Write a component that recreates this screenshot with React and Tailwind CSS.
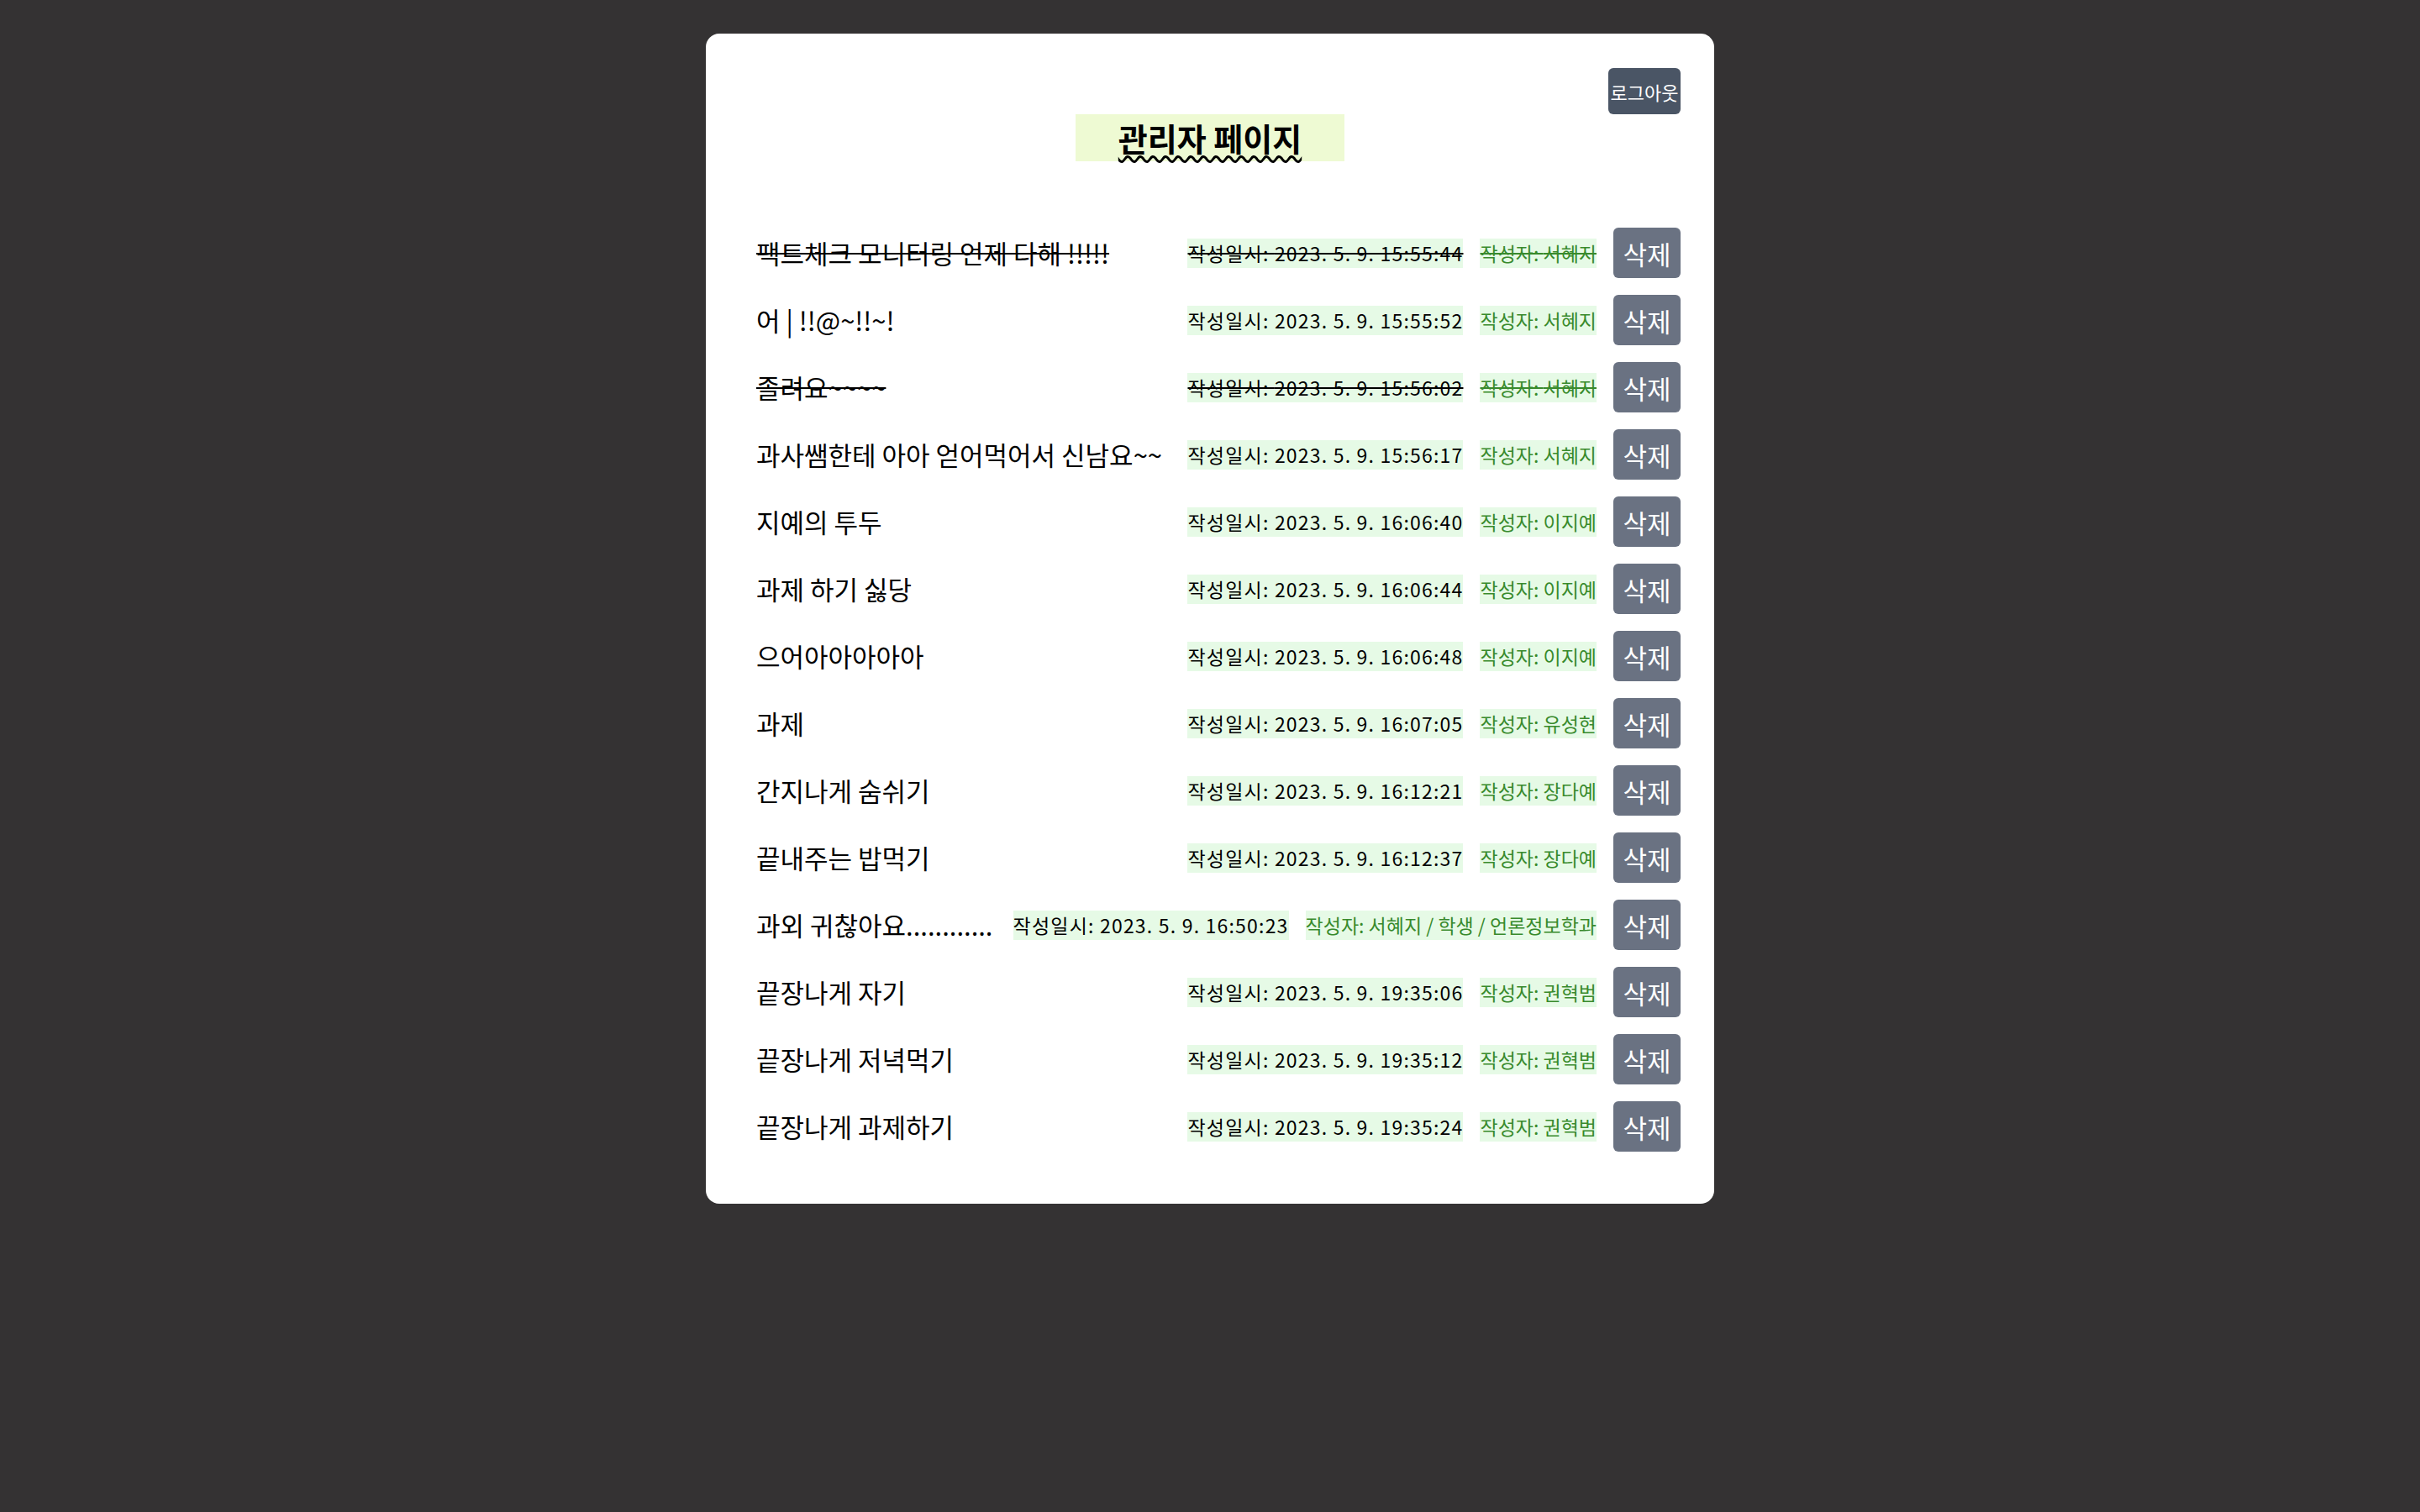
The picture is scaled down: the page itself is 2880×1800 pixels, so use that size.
import React, { useState } from "react";

const initialTodos = [
  { id: 1, text: "팩트체크 모니터링 언제 다해 !!!!!", date: "2023. 5. 9. 15:55:44", author: "서혜지", done: true },
  { id: 2, text: "어 | !!@~!!~!", date: "2023. 5. 9. 15:55:52", author: "서혜지", done: false },
  { id: 3, text: "졸려요~~~~", date: "2023. 5. 9. 15:56:02", author: "서혜지", done: true },
  { id: 4, text: "과사쌤한테 아아 얻어먹어서 신남요~~", date: "2023. 5. 9. 15:56:17", author: "서혜지", done: false },
  { id: 5, text: "지예의 투두", date: "2023. 5. 9. 16:06:40", author: "이지예", done: false },
  { id: 6, text: "과제 하기 싫당", date: "2023. 5. 9. 16:06:44", author: "이지예", done: false },
  { id: 7, text: "으어아아아아아", date: "2023. 5. 9. 16:06:48", author: "이지예", done: false },
  { id: 8, text: "과제", date: "2023. 5. 9. 16:07:05", author: "유성현", done: false },
  { id: 9, text: "간지나게 숨쉬기", date: "2023. 5. 9. 16:12:21", author: "장다예", done: false },
  { id: 10, text: "끝내주는 밥먹기", date: "2023. 5. 9. 16:12:37", author: "장다예", done: false },
  { id: 11, text: "과외 귀찮아요............", date: "2023. 5. 9. 16:50:23", author: "서혜지 / 학생 / 언론정보학과", done: false },
  { id: 12, text: "끝장나게 자기", date: "2023. 5. 9. 19:35:06", author: "권혁범", done: false },
  { id: 13, text: "끝장나게 저녁먹기", date: "2023. 5. 9. 19:35:12", author: "권혁범", done: false },
  { id: 14, text: "끝장나게 과제하기", date: "2023. 5. 9. 19:35:24", author: "권혁범", done: false },
];

const TodoItem = ({ todo, onDelete }) => {
  const strike = todo.done ? "line-through decoration-2" : "";

  return (
    <li className="flex h-[80px] items-center">
      <span className={`flex-1 text-[31px] leading-[42px] text-black whitespace-nowrap ${strike}`}>
        {todo.text}
      </span>
      <div className="flex items-center gap-5">
        <span className={`bg-[#e6fae6] text-[23px] tracking-[1.2px] leading-[35px] text-black whitespace-nowrap ${strike}`}>
          작성일시: {todo.date}
        </span>
        <span className={`bg-[#e6fae6] text-[23px] leading-[35px] text-[#388a2c] whitespace-nowrap ${strike}`}>
          작성자: {todo.author}
        </span>
        <button
          className="w-[80px] h-[60px] rounded-md bg-gray-500 text-white text-[31px] leading-none"
          onClick={() => onDelete(todo.id)}
        >
          삭제
        </button>
      </div>
    </li>
  );
};

const App = () => {
  const [todos, setTodos] = useState(initialTodos);

  const handleDelete = (id) => {
    setTodos(todos.filter((t) => t.id !== id));
  };

  return (
    <div
      className="min-h-screen bg-[#343233] pt-10 flex justify-center items-start"
      style={{ fontFamily: '"Noto Sans CJK KR", "Noto Sans", sans-serif' }}
    >
      <div className="w-[1200px] bg-white rounded-2xl px-10 pt-[41px] pb-[52px]">
        <div className="flex justify-end">
          <button className="w-[86px] h-[55px] rounded-md bg-gray-600 text-white text-[22px] leading-none whitespace-nowrap">
            로그아웃
          </button>
        </div>

        <div className="flex justify-center">
          <h1 className="w-[320px] h-[56px] bg-[#eefad3] flex items-center justify-center">
            <span className="text-[38px] font-bold leading-none text-black underline decoration-wavy decoration-[3px] underline-offset-[5px]">
              관리자 페이지
            </span>
          </h1>
        </div>

        <ul className="mt-[69px] pl-5">
          {todos.map((todo) => (
            <TodoItem key={todo.id} todo={todo} onDelete={handleDelete} />
          ))}
        </ul>
      </div>
    </div>
  );
};

export default App;
